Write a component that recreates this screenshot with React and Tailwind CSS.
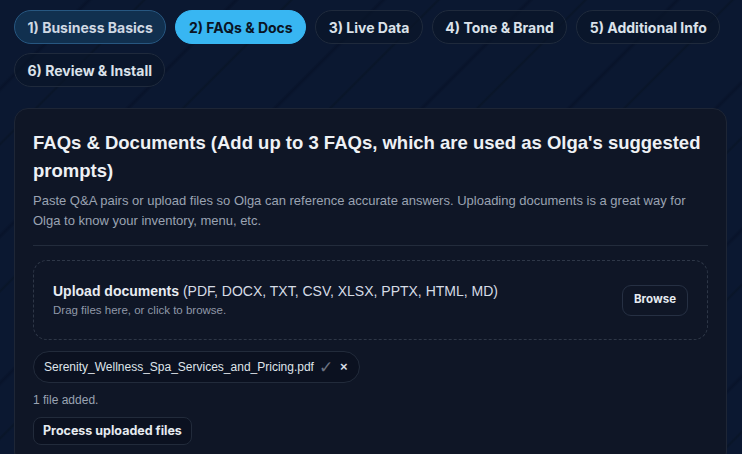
import React from "react";

const tabs = [
  { label: "1) Business Basics", state: "done" },
  { label: "2) FAQs & Docs", state: "active" },
  { label: "3) Live Data", state: "idle" },
  { label: "4) Tone & Brand", state: "idle" },
  { label: "5) Additional Info", state: "idle" },
  { label: "6) Review & Install", state: "idle" },
];

function Tab({ label, state }) {
  const base =
    "h-[34px] px-[12.5px] rounded-full text-[14px] font-bold font-['Inter',sans-serif] flex items-center border whitespace-nowrap";
  if (state === "active")
    return <div className={base + " bg-[#38b6f2] border-[#38b6f2] text-[#0a1424]"}>{label}</div>;
  if (state === "done")
    return <div className={base + " bg-[#11304f] border-[#275781] text-[#cfd8e3]"}>{label}</div>;
  return <div className={base + " bg-[#0a1528]/60 border-[#1f2a3c] text-[#dbe2ea]"}>{label}</div>;
}

export default function App() {
  return (
    <div className="w-[742px] h-[454px] overflow-hidden bg-[#0a1730] bg-[repeating-linear-gradient(135deg,#0b1831_0px,#0b1831_60px,#08132a_63px,#0b1831_66px,#0b1831_100px,#091528_102px,#0b1831_104px)] pt-[10px] pl-[14px] pr-[15px]">
      <div className="flex flex-wrap gap-[9px]">
        {tabs.map((t) => (
          <Tab key={t.label} {...t} />
        ))}
      </div>

      <div className="mt-[21px] rounded-[14px] border border-[#1e2636] bg-[#0f1626] px-[18px] pt-[20px] pb-[20px] font-['Liberation_Sans',Arial,sans-serif]">
        <h2 className="text-[18.5px] leading-[28px] font-bold text-[#eef1f5]">
          FAQs &amp; Documents (Add up to 3 FAQs, which are used as Olga's suggested prompts)
        </h2>
        <p className="mt-[6px] text-[13px] leading-[20px] text-[#9aa3b2] pr-[10px]">
          Paste Q&amp;A pairs or upload files so Olga can reference accurate answers. Uploading documents is a great way for Olga to know your inventory, menu, etc.
        </p>
        <div className="mt-[14px] h-px bg-[#232c3c]" />

        <div className="mt-[14px] h-[80px] rounded-[14px] border border-dashed border-[#2e3747] flex items-center justify-between pl-[19px] pr-[19px]">
          <div>
            <div className="text-[14px] leading-[18px] text-[#d6dce5]">
              <span className="font-bold text-[#e8ecf2]">Upload documents</span> (PDF, DOCX, TXT, CSV, XLSX, PPTX, HTML, MD)
            </div>
            <div className="mt-[2px] text-[11.5px] leading-[16px] text-[#8f98a8]">
              Drag files here, or click to browse.
            </div>
          </div>
          <button className="h-[31px] px-[11px] rounded-[9px] border border-[#263043] bg-[#0f1626] text-[11.5px] font-bold font-['Inter',sans-serif] text-[#e6ebf1]">
            Browse
          </button>
        </div>

        <div className="mt-[11px] inline-flex items-center h-[32px] rounded-full border border-[#222b3b] bg-[#0b1120] pl-[10px] pr-[11px] text-[12px] text-[#dfe4ea]">
          <span>Serenity_Wellness_Spa_Services_and_Pricing.pdf</span>
          <span className="ml-[5px] text-[#6b7280] text-[17px] leading-none">✓</span>
          <span className="ml-[7px] text-[#d8dde4] text-[13px] font-bold">×</span>
        </div>

        <div className="mt-[9px] text-[12px] leading-[16px] text-[#9aa3b2]">1 file added.</div>

        <button className="mt-[9px] h-[28px] px-[9px] rounded-[8px] border border-[#222b3b] bg-[#0b1120] text-[12.5px] font-bold font-['Inter',sans-serif] text-[#e6ebf1]">
          Process uploaded files
        </button>
      </div>
    </div>
  );
}
